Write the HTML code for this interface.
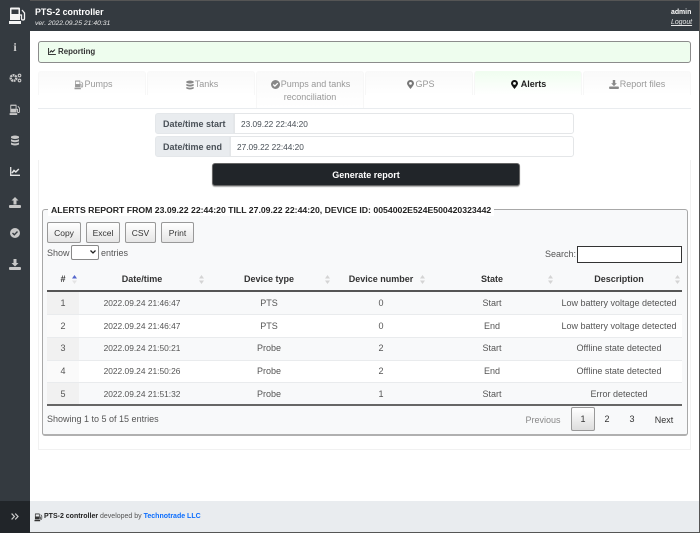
<!DOCTYPE html>
<html><head><meta charset="utf-8"><style>
*{box-sizing:border-box}
html,body{margin:0;padding:0;width:700px;height:533px;overflow:hidden;background:#fff;font-family:"Liberation Sans",sans-serif;font-size:9px;color:#212529}
.a{position:absolute}
.t{position:absolute;white-space:nowrap;line-height:12px}
.c{transform:translateX(-50%)}
.tab{position:absolute;top:71px;width:108px;height:24px;background:linear-gradient(#f9f9f9,#fff);border-radius:3px 3px 0 0;border-left:1px solid #f7f7f7;border-right:1px solid #f7f7f7;text-align:center;color:#999;line-height:27px;font-size:9px}
.lab{position:absolute;background:#e9ecef;border:1px solid #e4e7ea;border-radius:3px 0 0 3px;font-weight:bold;color:#495057;line-height:20px;padding-left:7px;font-size:9px}
.inp{position:absolute;background:#fff;border:1px solid #e4e6e8;border-radius:0 3px 3px 0;color:#495057;line-height:20px;padding-left:6px;font-size:8.300px}
.btn{position:absolute;top:222px;height:21px;border:1px solid #999;border-radius:2px;background:linear-gradient(#fff,#e6e6e6);text-align:center;line-height:20px;font-size:8.500px;color:#333}
.row{position:absolute;left:47px;width:635px;height:23px;border-top:1px solid #e9ebed}
.fc{position:absolute;left:0;top:0;width:32px;height:100%}
.th{font-weight:bold;color:#333;top:273px}
.td{color:#555}
.d{font-size:8.400px}
.s{position:absolute;top:275px;width:5px;height:9px}
svg{position:absolute;display:block}
</style></head><body>

<div class="a" style="left:0;top:0;width:700px;height:31px;background:#343a40;border-top:1px solid #555"></div>
<div class="a" style="left:0;top:0;width:30px;height:533px;background:#343a40"></div>
<div class="a" style="left:0;top:501px;width:30px;height:32px;background:#212529"></div>
<div class="a" style="left:30px;top:501px;width:669px;height:31px;background:#e9ecef"></div>
<div class="a" style="left:699px;top:0;width:1px;height:533px;background:#555"></div>
<div class="a" style="left:30px;top:532px;width:670px;height:1px;background:#555"></div>

<svg style="left:8px;top:7px" width="19" height="18" viewBox="0 0 19 18"><path fill="#f4f4f4" fill-rule="evenodd" d="M2 1.500Q2 .5 3 .5H11Q12 .5 12 1.500V13H2ZM3.500 2.500V7H10.500V2.500ZM1 14H13V17H1Z"/><path fill="none" stroke="#f4f4f4" stroke-width="1.300" d="M12 8H13.500V11.500Q13.500 13 15 13Q16.500 13 16.500 11.500V6L14 3"/></svg>
<div class="t" style="left:35px;top:6px;color:#fff;font-weight:bold;font-size:8.900px">PTS-2 controller</div>
<div class="t" style="left:35px;top:18px;color:#e8e8e8;font-style:italic;font-size:6.800px">ver. 2022.09.25 21:40:31</div>
<div class="t" style="left:671px;top:7px;color:#fff;font-weight:bold;font-size:6.900px">admin</div>
<div class="t" style="left:671px;top:17px;color:#e8e8e8;font-style:italic;font-size:6.900px;text-decoration:underline">Logout</div>

<!-- sidebar icons -->
<div class="t c" style="left:15px;top:41px;color:#ccc;font-weight:bold;font-size:12px;font-family:'Liberation Serif',serif">i</div>
<svg style="left:9px;top:73px" width="13" height="10" viewBox="0 0 13 10"><circle cx="4.500" cy="5" r="2.800" fill="none" stroke="#c8c8c8" stroke-width="2.400" stroke-dasharray="1.800 .6"/><circle cx="10.500" cy="2.500" r="1.300" fill="none" stroke="#c8c8c8" stroke-width="1.100"/><circle cx="10.500" cy="7.500" r="1.300" fill="none" stroke="#c8c8c8" stroke-width="1.100"/></svg>
<svg style="left:9px;top:104px" width="12" height="12" viewBox="0 0 19 18"><path fill="#c8c8c8" fill-rule="evenodd" d="M2 1.500Q2 .5 3 .5H11Q12 .5 12 1.500V13H2ZM3.500 2.500V7H10.500V2.500ZM1 14H13V17H1Z"/><path fill="none" stroke="#c8c8c8" stroke-width="1.500" d="M12 8H13.500V11.500Q13.500 13 15 13Q16.500 13 16.500 11.500V6L14 3"/></svg>
<svg style="left:11px;top:135px" width="8" height="11" viewBox="0 0 8 11"><path fill="#c8c8c8" d="M0 1.500Q4-.5 8 1.500V3Q4 5 0 3ZM0 4.200Q4 6.200 8 4.200V6.300Q4 8.300 0 6.300ZM0 7.500Q4 9.500 8 7.500V9.500Q4 11.500 0 9.500Z"/></svg>
<svg style="left:10px;top:167px" width="10" height="9" viewBox="0 0 10 9"><path fill="none" stroke="#e4e4e4" stroke-width="1.300" d="M.7 0V8.300H10"/><path fill="none" stroke="#e4e4e4" stroke-width="1.500" d="M2 6L4 3.500L5.800 5L8.800 2"/></svg>
<svg style="left:9px;top:197px" width="12" height="11" viewBox="0 0 12 11"><path fill="#c8c8c8" d="M6 0L9.500 3.500H7.500V7.500H4.500V3.500H2.500ZM1 8H11Q12 8 12 9V10Q12 11 11 11H1Q0 11 0 10V9Q0 8 1 8Z"/></svg>
<svg style="left:10px;top:228px" width="10" height="10" viewBox="0 0 10 10"><circle cx="5" cy="5" r="5" fill="#c8c8c8"/><path fill="none" stroke="#343a40" stroke-width="1.400" d="M2.500 5L4.300 6.800L7.500 3.500"/></svg>
<svg style="left:9px;top:259px" width="12" height="11" viewBox="0 0 12 11"><path fill="#c8c8c8" d="M4.500 0H7.500V4H9.500L6 7.500L2.500 4H4.500ZM1 8H11Q12 8 12 9V10Q12 11 11 11H1Q0 11 0 10V9Q0 8 1 8Z"/></svg>
<svg style="left:11px;top:513px" width="8" height="7" viewBox="0 0 8 7"><path fill="none" stroke="#ccc" stroke-width="1.200" d="M.6.6L3.400 3.500L.6 6.400M4.200.6L7 3.500L4.200 6.400"/></svg>

<!-- alert -->
<div class="a" style="left:38px;top:41px;width:653px;height:22px;background:#eefdee;border:1px solid #8c8c8c;border-radius:3px"></div>
<svg style="left:48px;top:48px" width="8" height="7" viewBox="0 0 10 9"><path fill="none" stroke="#222" stroke-width="1.200" d="M.6 0V8.400H10"/><path fill="none" stroke="#222" stroke-width="1.300" d="M2 6L4 3.500L5.800 5L8.800 2"/></svg>
<div class="t" style="left:58px;top:46px;font-weight:bold;font-size:7.900px;color:#333">Reporting</div>

<!-- tabs -->
<div class="tab" style="left:38px"><span style="margin-left:13px">Pumps</span></div>
<div class="tab" style="left:147px"><span style="margin-left:11px">Tanks</span></div>
<div class="tab" style="left:256px;height:37px;line-height:13px;padding-top:7px"><span style="margin-left:11px">Pumps and tanks</span><br>reconciliation</div>
<div class="tab" style="left:365px"><span style="margin-left:12px">GPS</span></div>
<div class="tab" style="left:474px;background:linear-gradient(#effdef,#fff);color:#222;font-weight:bold"><span style="margin-left:11px">Alerts</span></div>
<div class="tab" style="left:583px"><span style="margin-left:11px">Report files</span></div>
<div class="a" style="left:38px;top:108px;width:653px;height:1px;background:#e9ecef"></div>
<svg style="left:74px;top:80px" width="10" height="10" viewBox="0 0 19 18"><path fill="#999" fill-rule="evenodd" d="M2 1.500Q2 .5 3 .5H11Q12 .5 12 1.500V13H2ZM3.500 2.500V7H10.500V2.500ZM1 14H13V17H1Z"/><path fill="none" stroke="#999" stroke-width="1.500" d="M12 8H13.500V11.500Q13.500 13 15 13Q16.500 13 16.500 11.500V6L14 3"/></svg>
<svg style="left:186px;top:80px" width="8" height="10" viewBox="0 0 8 11"><path fill="#888" d="M0 1.500Q4-.5 8 1.500V3Q4 5 0 3ZM0 4.200Q4 6.200 8 4.200V6.300Q4 8.300 0 6.300ZM0 7.500Q4 9.500 8 7.500V9.500Q4 11.500 0 9.500Z"/></svg>
<svg style="left:271px;top:80px" width="9" height="9" viewBox="0 0 10 10"><circle cx="5" cy="5" r="5" fill="#888"/><path fill="none" stroke="#fff" stroke-width="1.400" d="M2.500 5L4.300 6.800L7.500 3.500"/></svg>
<svg style="left:407px;top:80px" width="7" height="9" viewBox="0 0 7 9"><path fill="#777" fill-rule="evenodd" d="M3.500 0A3.400 3.400 0 0 1 7 3.400Q7 5 3.500 9Q0 5 0 3.400A3.400 3.400 0 0 1 3.500 0ZM3.500 2A1.400 1.400 0 1 0 3.500 4.800A1.400 1.400 0 1 0 3.500 2Z"/></svg>
<svg style="left:511px;top:80px" width="7" height="9" viewBox="0 0 7 9"><path fill="#111" fill-rule="evenodd" d="M3.500 0A3.400 3.400 0 0 1 7 3.400Q7 5 3.500 9Q0 5 0 3.400A3.400 3.400 0 0 1 3.500 0ZM3.500 2A1.400 1.400 0 1 0 3.500 4.800A1.400 1.400 0 1 0 3.500 2Z"/></svg>
<svg style="left:609px;top:80px" width="10" height="9" viewBox="0 0 12 11"><path fill="#888" d="M4.500 0H7.500V4H9.500L6 7.500L2.500 4H4.500ZM1 8H11Q12 8 12 9V10Q12 11 11 11H1Q0 11 0 10V9Q0 8 1 8Z"/></svg>

<!-- date inputs -->
<div class="lab" style="left:155px;top:113px;width:79px;height:21px">Date/time start</div>
<div class="inp" style="left:234px;top:113px;width:340px;height:21px">23.09.22 22:44:20</div>
<div class="lab" style="left:155px;top:136px;width:75px;height:21px">Date/time end</div>
<div class="inp" style="left:230px;top:136px;width:344px;height:21px">27.09.22 22:44:20</div>

<!-- outer card -->
<div class="a" style="left:38px;top:160px;width:653px;height:290px;border:1px solid #f1f1f1;border-top:none"></div>
<div class="a" style="left:212px;top:163px;width:308px;height:23px;background:#212529;border:1px solid #666;border-radius:3px;color:#fff;font-weight:bold;text-align:center;line-height:22px;font-size:9px;box-shadow:0 1px 1px #aaa">Generate report</div>

<!-- fieldset -->
<div class="a" style="left:42px;top:209px;width:646px;height:227px;background:#f8f9fa;border:1px solid #a8a8a8;border-bottom:2px solid #b0b0b0;border-radius:3px"></div>
<div class="t" style="left:48px;top:204px;background:#fff;padding:0 3px;font-weight:bold;font-size:8.700px;color:#222;height:12px">ALERTS REPORT FROM 23.09.22 22:44:20 TILL 27.09.22 22:44:20, DEVICE ID: 0054002E524E500420323442</div>
<div class="btn" style="left:47px;width:34px">Copy</div>
<div class="btn" style="left:86px;width:34px">Excel</div>
<div class="btn" style="left:125px;width:31px">CSV</div>
<div class="btn" style="left:161px;width:33px">Print</div>
<div class="t td" style="left:47px;top:247px">Show</div>
<div class="a" style="left:71px;top:245px;width:28px;height:15px;background:#fff;border:1px solid #888;border-radius:2px"></div>
<svg style="left:90px;top:250px" width="6" height="4" viewBox="0 0 6 4"><path fill="none" stroke="#222" stroke-width="1.300" d="M.5.5L3 3L5.500.5"/></svg>
<div class="t td" style="left:101px;top:247px">entries</div>
<div class="t td" style="left:545px;top:248px">Search:</div>
<div class="a" style="left:577px;top:246px;width:105px;height:17px;background:#fff;border:1px solid #333"></div>

<!-- table head -->
<div class="t c th" style="left:63px">#</div>
<div class="t c th" style="left:142px">Date/time</div>
<div class="t c th" style="left:269px">Device type</div>
<div class="t c th" style="left:381px">Device number</div>
<div class="t c th" style="left:492px">State</div>
<div class="t c th" style="left:619px">Description</div>
<svg class="s" style="left:72px" viewBox="0 0 5 9"><path fill="#5566cc" d="M0 3.500L2.500 0L5 3.500Z"/><path fill="#e4e4e4" d="M0 5.500L2.500 9L5 5.500Z"/></svg>
<svg class="s" style="left:199px" viewBox="0 0 5 9"><path fill="#d4d4d4" d="M0 3.500L2.500 0L5 3.500ZM0 5.500L2.500 9L5 5.500Z"/></svg>
<svg class="s" style="left:325px" viewBox="0 0 5 9"><path fill="#d4d4d4" d="M0 3.500L2.500 0L5 3.500ZM0 5.500L2.500 9L5 5.500Z"/></svg>
<svg class="s" style="left:420px" viewBox="0 0 5 9"><path fill="#d4d4d4" d="M0 3.500L2.500 0L5 3.500ZM0 5.500L2.500 9L5 5.500Z"/></svg>
<svg class="s" style="left:548px" viewBox="0 0 5 9"><path fill="#d4d4d4" d="M0 3.500L2.500 0L5 3.500ZM0 5.500L2.500 9L5 5.500Z"/></svg>
<svg class="s" style="left:675px" viewBox="0 0 5 9"><path fill="#d4d4d4" d="M0 3.500L2.500 0L5 3.500ZM0 5.500L2.500 9L5 5.500Z"/></svg>

<!-- rows -->
<div class="row" style="top:292px;background:#f8f9fa;border-top:none"><div class="fc" style="background:#f1f1f1"></div></div>
<div class="row" style="top:314px;background:#fff"><div class="fc" style="background:#fafafa"></div></div>
<div class="row" style="top:337px;background:#f8f9fa"><div class="fc" style="background:#f1f1f1"></div></div>
<div class="row" style="top:360px;background:#fff"><div class="fc" style="background:#fafafa"></div></div>
<div class="row" style="top:382px;background:#f8f9fa"><div class="fc" style="background:#f1f1f1"></div></div>
<div class="a" style="left:47px;top:290px;width:635px;height:2px;background:#555"></div>
<div class="a" style="left:47px;top:404px;width:635px;height:2px;background:#666"></div>

<div class="t c td" style="left:63px;top:297px">1</div><div class="t c td d" style="left:142px;top:297px">2022.09.24 21:46:47</div><div class="t c td" style="left:269px;top:297px">PTS</div><div class="t c td" style="left:381px;top:297px">0</div><div class="t c td" style="left:492px;top:297px">Start</div><div class="t c td" style="left:619px;top:297px">Low battery voltage detected</div>
<div class="t c td" style="left:63px;top:320px">2</div><div class="t c td d" style="left:142px;top:320px">2022.09.24 21:46:47</div><div class="t c td" style="left:269px;top:320px">PTS</div><div class="t c td" style="left:381px;top:320px">0</div><div class="t c td" style="left:492px;top:320px">End</div><div class="t c td" style="left:619px;top:320px">Low battery voltage detected</div>
<div class="t c td" style="left:63px;top:342px">3</div><div class="t c td d" style="left:142px;top:342px">2022.09.24 21:50:21</div><div class="t c td" style="left:269px;top:342px">Probe</div><div class="t c td" style="left:381px;top:342px">2</div><div class="t c td" style="left:492px;top:342px">Start</div><div class="t c td" style="left:619px;top:342px">Offline state detected</div>
<div class="t c td" style="left:63px;top:365px">4</div><div class="t c td d" style="left:142px;top:365px">2022.09.24 21:50:26</div><div class="t c td" style="left:269px;top:365px">Probe</div><div class="t c td" style="left:381px;top:365px">2</div><div class="t c td" style="left:492px;top:365px">End</div><div class="t c td" style="left:619px;top:365px">Offline state detected</div>
<div class="t c td" style="left:63px;top:388px">5</div><div class="t c td d" style="left:142px;top:388px">2022.09.24 21:51:32</div><div class="t c td" style="left:269px;top:388px">Probe</div><div class="t c td" style="left:381px;top:388px">1</div><div class="t c td" style="left:492px;top:388px">Start</div><div class="t c td" style="left:619px;top:388px">Error detected</div>

<!-- pagination -->
<div class="t td" style="left:47px;top:413px">Showing 1 to 5 of 15 entries</div>
<div class="t c" style="left:543px;top:414px;color:#888">Previous</div>
<div class="a" style="left:571px;top:407px;width:24px;height:24px;background:linear-gradient(#fff,#ddd);border:1px solid #999;border-radius:2px"></div>
<div class="t c" style="left:583px;top:413px;color:#333">1</div>
<div class="t c" style="left:607px;top:413px;color:#333">2</div>
<div class="t c" style="left:632px;top:413px;color:#333">3</div>
<div class="t c" style="left:664px;top:414px;color:#333">Next</div>

<!-- footer -->
<svg style="left:34px;top:513px" width="9" height="9" viewBox="0 0 19 18"><path fill="#333" fill-rule="evenodd" d="M2 1.500Q2 .5 3 .5H11Q12 .5 12 1.500V13H2ZM3.500 2.500V7H10.500V2.500ZM1 14H13V17H1Z"/><path fill="none" stroke="#333" stroke-width="1.500" d="M12 8H13.500V11.500Q13.500 13 15 13Q16.500 13 16.500 11.500V6L14 3"/></svg>
<div class="t" style="left:44px;top:511px;font-size:7px;color:#555"><b style="color:#222">PTS-2 controller</b> developed by <b style="color:#0d6efd">Technotrade LLC</b></div>
</body></html>
